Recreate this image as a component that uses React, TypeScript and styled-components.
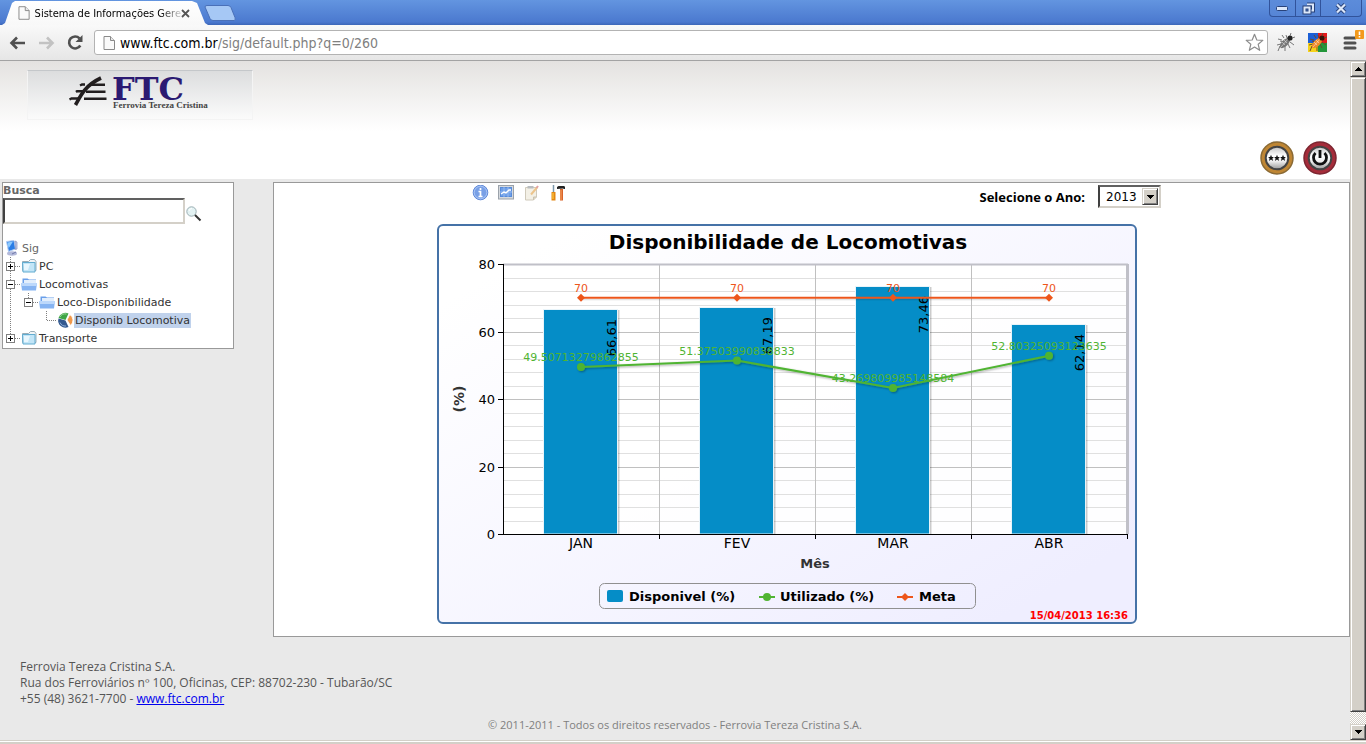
import React from "react";
import styled, { createGlobalStyle, css } from "styled-components";

const verdana = `"DejaVu Sans", Verdana, sans-serif`;
const tahoma = `"DejaVu Sans Condensed", "DejaVu Sans", Tahoma, sans-serif`;
const trebuchet = `"Open Sans", "Trebuchet MS", sans-serif`;

const GlobalStyle = createGlobalStyle`
  * { box-sizing: border-box; }
  body { margin: 0; background: #e9e9e9; font-family: ${verdana}; font-size: 11px; color: #333; }
  button, input, select { font: inherit; color: inherit; margin: 0; }
  svg { display: block; }
`;

const Window = styled.div`
  display: flex;
  flex-direction: column;
  min-height: 100vh;
`;

/* ---------- browser frame ---------- */

const TabStrip = styled.div`
  display: flex;
  align-items: flex-end;
  height: 25px;
  padding-left: 2px;
  background: linear-gradient(#6395e0, #4b79cf 22px, #3c66b8);
`;

const Tab = styled.div`
  display: flex;
  align-items: center;
  width: 206px;
  height: 25px;
  padding: 1px 18px 0 16px;
  background: linear-gradient(#ffffff, #f8f8f8);
  clip-path: polygon(0 100%, 3px 92%, 10px 12%, 13px 4%, 190px 4%, 195px 12%, 203px 92%, 100% 100%);
`;

const TabTitle = styled.span`
  flex: 1;
  margin-left: 5px;
  white-space: nowrap;
  font-family: ${tahoma};
  font-size: 11px;
  color: #000;
  mask-image: linear-gradient(to right, #000 125px, transparent 150px);
`;

const PlainButton = styled.button`
  display: flex;
  align-items: center;
  justify-content: center;
  padding: 0;
  border: 0;
  background: none;
`;

const NewTab = styled(PlainButton)`
  align-self: center;
  margin-left: -4px;
`;

const WindowButtons = styled.div`
  display: flex;
  align-self: flex-start;
  height: 17px;
  margin: 0 4px 0 auto;
  border: 1px solid #31539b;
  border-top: 0;
  border-radius: 0 0 4px 4px;
  background: linear-gradient(#5c8cda, #5685d6);
`;

const WindowButton = styled(PlainButton)<{ $wide?: boolean }>`
  width: ${(p) => (p.$wide ? 41 : 25)}px;
  & + & { border-left: 1px solid #31539b; }
`;

const Toolbar = styled.div`
  display: flex;
  align-items: center;
  height: 36px;
  padding-right: 1px;
  border-bottom: 1px solid #a3a3a3;
  background: linear-gradient(#f9f9f9, #e6e6e6);
`;

const NavButton = styled(PlainButton)`
  width: 29px;
  height: 24px;
  &:first-child { margin-left: 3px; }
`;

const AddressBar = styled.form`
  display: flex;
  flex: 1;
  align-items: center;
  height: 25px;
  margin: 0 1px 0 4px;
  padding: 0 3px 0 8px;
  border: 1px solid #b3b3b3;
  border-radius: 3px;
  background: #fff;
  font-family: ${tahoma};
  font-size: 14px;
`;

const Host = styled.label`
  margin-left: 5px;
  color: #000;
`;

const PathInput = styled.input`
  flex: 1;
  min-width: 0;
  padding: 0;
  border: 0;
  outline: 0;
  background: none;
  color: #808080;
`;

const Extension = styled(PlainButton)`
  width: 32px;
  height: 26px;
`;

const MenuButton = styled(Extension)`
  align-items: flex-start;
  justify-content: flex-end;
  height: 30px;
`;

const Viewport = styled.div`
  display: flex;
  flex: 1;
`;

const StatusEdge = styled.div`
  height: 4px;
  border-top: 1px solid #d4d0c8;
  background: linear-gradient(#fff 1px, #d4d0c8 1px);
`;

/* ---------- scroll bar ---------- */

const raised = css`
  border: 1px solid;
  border-color: #d4d0c8 #404040 #404040 #d4d0c8;
  box-shadow: inset 1px 1px #fff, inset -1px -1px #808080;
  background: #d4d0c8;
`;

const ScrollBar = styled.div`
  display: flex;
  flex-direction: column;
  width: 16px;
  background: repeating-conic-gradient(#fff 0 25%, #d4d0c8 0 50%) 0 0 / 2px 2px;
`;

const ScrollButton = styled(PlainButton)`
  ${raised}
  height: 16px;
`;

const ScrollThumb = styled.div`
  ${raised}
  flex: 1;
  margin-bottom: 12px;
`;

/* ---------- page ---------- */

const Page = styled.div`
  flex: 1;
  min-width: 0;
  background: #e9e9e9;
`;

const Header = styled.header`
  display: flex;
  flex-direction: column;
  justify-content: space-between;
  height: 118px;
  padding: 9px 13px 4px 27px;
  background: linear-gradient(#e4e2e0, #fff 70px);
`;

const Logo = styled.a`
  display: block;
  width: 226px;
  height: 50px;
  border: 1px solid #f4f4f4;
  border-top-color: #c4c7ca;
  background: linear-gradient(#dcddde, #fbfbfb);
`;

const HeaderActions = styled.nav`
  display: flex;
  justify-content: flex-end;
  gap: 9px;
`;

const Columns = styled.div`
  display: flex;
  align-items: flex-start;
  gap: 39px;
  padding: 3px 0 0 2px;
`;

const Sidebar = styled.aside`
  flex: none;
  width: 232px;
  border: 1px solid #999;
  background: #fff;
`;

const SearchLabel = styled.label`
  display: block;
  line-height: 15px;
  font-weight: bold;
  color: #666;
`;

const SearchRow = styled.form`
  display: flex;
  align-items: center;
  gap: 1px;
  margin-bottom: 15px;
`;

const SearchInput = styled.input`
  width: 182px;
  height: 26px;
  padding: 2px;
  border: 2px solid;
  border-color: #606060 #d4d0c8 #d4d0c8 #404040;
  border-radius: 0;
  outline: 0;
`;

const SearchButton = styled(PlainButton)`
  margin-top: 6px;
`;

const Tree = styled.ul`
  margin: 0;
  padding: 0 0 1px;
  list-style: none;
`;

const TreeRow = styled.li`
  display: flex;
  align-items: center;
  height: 18px;
`;

const TreeLink = styled.a<{ $selected?: boolean; $root?: boolean }>`
  padding: 0 1px;
  margin-left: ${(p) => (p.$root ? 0 : -1)}px;
  line-height: 15px;
  text-decoration: none;
  white-space: nowrap;
  color: ${(p) => (p.$root ? "#666" : "#333")};
  background: ${(p) => (p.$selected ? "#c0d2ec" : "none")};
`;

const Main = styled.main`
  display: flex;
  justify-content: center;
  flex: 1;
  min-width: 0;
  padding: 2px 25px 12px 0;
  border: 1px solid #999;
  background: #fff;
`;

const Report = styled.section`
  width: 724px;
`;

const ReportBar = styled.div`
  display: flex;
  align-items: center;
  justify-content: space-between;
  height: 23px;
  margin-bottom: 16px;
  padding-left: 35px;
`;

const ReportTools = styled.div`
  display: flex;
  align-self: flex-start;
  gap: 9px;
`;

const YearPicker = styled.div`
  display: flex;
  align-items: center;
  gap: 13px;
`;

const YearLabel = styled.label`
  font-family: ${trebuchet};
  font-size: 13px;
  font-weight: bold;
  color: #000;
`;

const SelectBox = styled.div`
  position: relative;
  width: 63px;
  height: 23px;
  border: 2px solid;
  border-color: #606060 #d4d0c8 #d4d0c8 #404040;
  background: #fff;
`;

const YearSelect = styled.select`
  width: 100%;
  height: 100%;
  padding: 0 0 0 6px;
  border: 0;
  outline: 0;
  appearance: none;
  background: none;
  font-size: 12px;
  color: #000;
`;

const SelectArrow = styled.span`
  ${raised}
  position: absolute;
  top: 1px;
  right: 1px;
  bottom: 1px;
  display: flex;
  align-items: center;
  justify-content: center;
  width: 16px;
  pointer-events: none;
`;

const ChartCard = styled.figure`
  width: 700px;
  margin: 0;
  border: 2px solid #4572a7;
  border-radius: 6px;
  background: linear-gradient(150deg, #fff 10%, #efeeff 90%);
`;

const Footer = styled.footer`
  padding: 22px 0 7px;
  font-family: ${trebuchet};
  font-size: 12px;
  line-height: 16px;
  color: #555;
`;

const Address = styled.address`
  padding-left: 20px;
  font-style: normal;
  a { color: #0000ee; }
`;

const Copyright = styled.p`
  margin: 10px 0 0;
  text-align: center;
  font-size: 11px;
  color: #808080;
`;

/* ---------- icons ---------- */

const PageIcon = ({ h = 14 }: { h?: number }) => (
  <svg width="12" height={h} viewBox="0 0 12 14">
    <path d="M1 .5h6.500l4 4v9h-10.500z" fill="#fafafa" stroke="#8a8a8a" />
    <path d="M7.500 .5v4h4" fill="#e8e8e8" stroke="#8a8a8a" />
  </svg>
);

const Arrow = ({ dim, flip }: { dim?: boolean; flip?: boolean }) => (
  <svg width="17" height="14" viewBox="0 0 17 14" transform={flip ? "scale(-1 1)" : undefined}>
    <path d="M8 1.500L2.500 7L8 12.500M3 7h13" fill="none" stroke={dim ? "#c2c2c2" : "#505050"} strokeWidth="2.600" />
  </svg>
);

const ReloadIcon = () => (
  <svg width="17" height="17" viewBox="0 0 17 17">
    <path d="M13.300 11.500A6 6 0 1 1 12.500 4.300" fill="none" stroke="#505050" strokeWidth="2.600" />
    <path d="M15.500 1v7h-7z" fill="#505050" />
  </svg>
);

const Triangle = ({ up }: { up?: boolean }) => (
  <svg width="7" height="4" viewBox="0 0 7 4" shapeRendering="crispEdges">
    <path d={up ? "M0 4L3.500 0L7 4z" : "M0 0h7L3.500 4z"} fill="#000" />
  </svg>
);

const BugBody = ({ body, legs, dark }: { body: string; legs: string; dark: string }) => (
  <>
    <path d="M6 7L2 6M8 5L6 2M5 11L1 12M4 13L2 18M9 13L9 18M12 11L14 15M14 9L18 12M8 9L4 8M11 5L10 2" stroke={legs} strokeWidth="1" fill="none" />
    <ellipse cx="9" cy="10" rx="6.500" ry="3.200" transform="rotate(-45 9 10)" fill={body} />
    <path d="M5 14L12 6M6 9L9 12M8 7L11 10" stroke="#fff" strokeOpacity=".45" />
    <circle cx="14" cy="5" r="2.600" fill={dark} />
    <path d="M14 3L15 0M16 5L19 4" stroke={legs} />
  </>
);

const GreyBug = () => (
  <svg width="19" height="19" viewBox="0 0 19 19"><BugBody body="#777" legs="#777" dark="#222" /></svg>
);

const ColourBug = () => (
  <svg width="19" height="19" viewBox="0 0 19 19">
    <path d="M0 0h10v10H0z" fill="#1c5fd6" />
    <path d="M10 0h9v10h-9z" fill="#e3191c" />
    <path d="M0 10h10v9H0z" fill="#f6d21a" />
    <path d="M10 10h9v9h-9z" fill="#23963a" />
    <BugBody body="#f08a2c" legs="#6b4a2a" dark="#3a1208" />
  </svg>
);

const MenuIcon = () => (
  <svg width="24" height="24" viewBox="0 0 24 24">
    <path d="M4 10h10M4 15h10M4 20h10" stroke="#505050" strokeWidth="3" strokeLinecap="round" />
    <rect x="14" y="2" width="9" height="9" rx="1" fill="#f39a1d" />
    <path d="M18.500 3.500v3.500M18.500 8v1.500" stroke="#fff" strokeWidth="1.600" />
  </svg>
);

const FtcLogo = () => (
  <svg width="224" height="48" viewBox="28 71 224 48">
    <g stroke="#221e1f" fill="none">
      <path d="M75.500 105C80 97 84 86 101 78" strokeWidth="3.600" />
      <path d="M80 85.500L82 84.500H85M76 92l1-.8h6M69.500 99.500l2-1h7.500" strokeWidth="2.400" />
      <path d="M90 84.700h15M86 91.700h19.500M84 98.800h22.500" strokeWidth="2.600" />
    </g>
    <text x="112" y="100" fontFamily="DejaVu Serif, serif" fontWeight="bold" fontSize="32" fill="#2b1a72">FTC</text>
    <text x="113" y="108" fontFamily="Liberation Serif, serif" fontWeight="bold" fontSize="9" fill="#444">Ferrovia Tereza Cristina</text>
  </svg>
);

const RoundIcon = ({ ring, edge, children }: { ring: string; edge: string; children: React.ReactNode }) => (
  <svg width="34" height="34" viewBox="0 0 34 34">
    <defs>
      <linearGradient id={`disc${edge.slice(1)}`} x2="0" y2="1">
        <stop offset="0" stopColor="#c4c4c4" />
        <stop offset=".4" stopColor="#fff" />
        <stop offset=".65" stopColor="#eee" />
        <stop offset="1" stopColor="#999" />
      </linearGradient>
    </defs>
    <circle cx="17" cy="17" r="16" fill={ring} stroke={edge} strokeWidth="1.500" />
    <circle cx="17" cy="17" r="11.300" fill={`url(#disc${edge.slice(1)})`} stroke="#444" strokeWidth="2" />
    {children}
  </svg>
);

const star = (cx: number) =>
  `M${cx} 13.800l.9 2.200h2l-1.500 1.600.7 2.400-2.100-1.400-2.100 1.400.7-2.400-1.500-1.600h2z`;

const MagnifierIcon = () => (
  <svg width="16" height="16" viewBox="0 0 16 16">
    <circle cx="5.500" cy="5.500" r="4.700" fill="#e3f2f3" stroke="#9aaeb2" />
    <path d="M9 9L14.500 14.500" stroke="#333" strokeWidth="2" />
    <path d="M3 5a3 3 0 0 1 3-2.500" stroke="#fff" fill="none" />
  </svg>
);

const ComputerIcon = () => (
  <svg width="18" height="18" viewBox="0 0 18 18">
    <ellipse cx="9" cy="14.500" rx="5" ry="2.200" fill="#b3b9da" />
    <path d="M9 15l4-2" stroke="#6f78a8" />
    <path d="M3.500 2.500L11 1.500l1.500 8.500L5.500 12.500z" fill="#2a7de6" stroke="#b4cdf2" />
    <path d="M4.500 3.500L10 2.500L6.500 8L5.500 9z" fill="#8ccaff" />
    <path d="M12 2l2 1v7l-1.500 .5z" fill="#c7cdea" stroke="#8891b8" strokeWidth=".7" />
  </svg>
);

const FolderIcon = ({ open }: { open?: boolean }) => (
  <svg width="18" height="18" viewBox="0 0 18 18">
    {open ? (
      <>
        <path d="M1.500 3.500h5l1.500 1h7v5h-13.500z" fill="#6a9fea" />
        <path d="M3 5h12v3H3z" fill="#e2eefc" />
        <path d="M0 8h16l-1 7.500H1z" fill="#86b4f2" />
        <path d="M0 8h16l-.4 3H.4z" fill="#bcd8fb" />
      </>
    ) : (
      <>
        <path d="M1.500 4.500h6l2-2h4l1.500 2v9h-13.500z" fill="#f1f4f6" stroke="#9aacb6" />
        <path d="M1.500 5.500h12.500v9.500h-12z" fill="#c2e5f7" stroke="#62acd0" />
        <path d="M3 7h6l-2 6H3z" fill="#e9f7fe" />
      </>
    )}
  </svg>
);

const PieIcon = () => (
  <svg width="18" height="18" viewBox="0 0 18 18">
    <path d="M8.500 9.500L1.500 7.500A7.200 7.200 0 0 0 11.500 16z" fill="#34598f" />
    <path d="M3 11.500A6 6 0 0 0 9 15" stroke="#8fb0da" fill="none" />
    <path d="M8.500 9L1.500 7A7.200 7.200 0 0 1 11.500 2.500z" fill="#3ea545" />
    <path d="M3 6A6 6 0 0 1 9.500 3" stroke="#9bd89b" fill="none" />
    <path d="M10 9L12.800 3.500a6.800 6.800 0 0 1 .7 11z" fill="#f0994c" stroke="#fff" strokeWidth=".8" />
  </svg>
);

const dots = { stroke: "#808080", strokeDasharray: "1 1" };

/* One 18px gutter cell of the tree: guide lines and, where there is one, the +/- box. */
const Gutter = ({ kind }: { kind: "none" | "line" | "elbow" | "plus" | "minus" | "plusLast" | "minusLast" }) => {
  const box = kind.startsWith("plus") || kind.startsWith("minus");
  const last = kind.endsWith("Last") || kind === "elbow";
  return (
    <svg width="18" height="18" viewBox="0 0 18 18" shapeRendering="crispEdges">
      {kind !== "none" && <path d={last ? "M7.500 0v9" : "M7.500 0v18"} {...dots} />}
      {(box || kind === "elbow") && <path d="M8 9.500h10" {...dots} />}
      {box && <rect x="3.500" y="5.500" width="8" height="8" fill="#fff" stroke="#808080" />}
      {box && <path d="M5 9.500h5" stroke="#000" />}
      {kind.startsWith("plus") && <path d="M7.500 7v5" stroke="#000" />}
    </svg>
  );
};

const InfoIcon = () => (
  <svg width="17" height="17" viewBox="0 0 17 17">
    <circle cx="8.500" cy="7.500" r="7.300" fill="#79a0e6" stroke="#5f88d8" />
    <circle cx="8.500" cy="7.500" r="6.300" fill="none" stroke="#a9c5f5" />
    <path d="M8.500 3v2M6.500 6.500h2v5M6.500 11.500h4" stroke="#fff" strokeWidth="1.700" fill="none" />
  </svg>
);

const ChartIcon = () => (
  <svg width="17" height="17" viewBox="0 0 17 17">
    <rect x=".5" y=".5" width="15" height="13.500" fill="#d5d9de" stroke="#9ba2aa" />
    <rect x="2.500" y="2.500" width="11" height="9" fill="#6e9fe8" stroke="#588bd9" />
    <path d="M6 2v10M10 2v10M2 7h12" stroke="#94b9f1" />
    <path d="M3 9l3-2 2 1 3-3h2" stroke="#fff" strokeWidth="1.400" fill="none" />
  </svg>
);

const NoteIcon = () => (
  <svg width="17" height="17" viewBox="0 0 17 17">
    <path d="M1.500 2.500h11v9.500l-3 3h-8z" fill="#f3f0e6" stroke="#d0cabb" />
    <path d="M3.500 1h6v2.500h-6z" fill="#b8bcbf" />
    <path d="M9.500 15v-3h3" fill="#ddd5c0" stroke="#c9c3b2" />
    <path d="M7 9.500L13 2.500" stroke="#ecc48c" strokeWidth="2" />
    <path d="M12.500 3l1.500-2" stroke="#e0a0a0" strokeWidth="2" />
  </svg>
);

const ToolsIcon = () => (
  <svg width="17" height="17" viewBox="0 0 17 17">
    <path d="M3.500 0v7" stroke="#7c98ac" strokeWidth="1.500" />
    <path d="M3.500 7v8.500" stroke="#e38612" strokeWidth="4" />
    <path d="M3 8v6" stroke="#ffd24a" />
    <path d="M7 4V2l1.500-1h5.500l1 .8V4h-1.500v-.5z" fill="#222" />
    <path d="M11.500 4v11.500" stroke="#d9642a" strokeWidth="3" />
    <path d="M11 5v10" stroke="#f7a766" />
  </svg>
);

/* ---------- chart ---------- */

const months = [
  { name: "JAN", bar: 66.61, barText: "66,61", used: 49.50713279862855, usedText: "49.50713279862855" },
  { name: "FEV", bar: 67.19, barText: "67,19", used: 51.37503990838833, usedText: "51.37503990838833" },
  { name: "MAR", bar: 73.46, barText: "73,46", used: 43.269809985148584, usedText: "43.269809985148584" },
  { name: "ABR", bar: 62.14, barText: "62,14", used: 52.80325093123635, usedText: "52.80325093123635" },
];
const goal = 70;
const plot = { left: 64, right: 688, top: 38, bottom: 308 };
const step = (plot.right - plot.left) / months.length;
const yOf = (v: number) => plot.bottom - (v * (plot.bottom - plot.top)) / 80;
const xOf = (i: number) => plot.left + step * (i + 0.5);
const crisp = (v: number) => Math.round(v) + 0.5;
const BLUE = "#058dc7";
const GREEN = "#50b432";
const ORANGE = "#ed561b";

const Diamond = ({ x, y }: { x: number; y: number }) => (
  <path d={`M${x - 4} ${y}l4-4 4 4-4 4z`} fill={ORANGE} />
);

const AvailabilityChart = () => (
  <svg width="696" height="396" viewBox="0 0 696 396" fontFamily="DejaVu Sans, Verdana, sans-serif" fontSize="13" role="img" aria-label="Disponibilidade de Locomotivas">
    <defs>
      <filter id="soft" x="-10%" y="-10%" width="120%" height="140%">
        <feDropShadow dx="1" dy="1" stdDeviation="1" floodOpacity=".35" />
      </filter>
    </defs>
    <text x="349" y="23" textAnchor="middle" fontSize="20" fontWeight="bold">Disponibilidade de Locomotivas</text>

    <rect x={plot.left} y={plot.top} width={plot.right - plot.left} height={plot.bottom - plot.top} fill="#fff" fillOpacity=".9" />
    {Array.from({ length: 21 }, (_, i) => (
      <path key={i} d={`M${plot.left} ${crisp(yOf(i * 4))}H${plot.right}`} stroke={i % 5 ? "#e0e0e0" : "#c0c0c0"} />
    ))}
    {[1, 2, 3].map((i) => (
      <path key={i} d={`M${plot.left + step * i + 0.5} ${plot.top}V${plot.bottom}`} stroke="#c0c0c0" />
    ))}
    <path d={`M${plot.left} ${plot.top + 0.5}H${plot.right + 1}`} stroke="#c0c0c8" strokeWidth="2" />
    <path d={`M${plot.right + 0.5} ${plot.top}V${plot.bottom}`} stroke="#c0c0c8" strokeWidth="3" />

    {months.map((m, i) => {
      const top = Math.round(yOf(m.bar)) + 1;
      return (
        <g key={m.name}>
          <path d={`M${xOf(i) + 37.5} ${top}V${plot.bottom}`} stroke="#000" strokeOpacity=".2" strokeWidth="2" />
          <rect x={xOf(i) - 37.5} y={top - 0.5} width="74" height={plot.bottom - top + 0.5} fill={BLUE} stroke="#e8f4fa" />
          <text transform={`translate(${xOf(i) + 35} ${top + 9}) rotate(-90)`} textAnchor="end" fontSize="13">{m.barText}</text>
        </g>
      );
    })}

    <g stroke="#000">
      <path d={`M${plot.left + 0.5} ${plot.top}V${plot.bottom}M${plot.left} ${plot.bottom + 0.5}H${plot.right + 1}`} />
      {[0, 20, 40, 60, 80].map((v) => (
        <path key={v} d={`M${plot.left - 5} ${crisp(yOf(v))}h5`} />
      ))}
      {[1, 2, 3, 4].map((i) => (
        <path key={i} d={`M${plot.left + step * i + 0.5} ${plot.bottom}v5`} />
      ))}
    </g>
    {[0, 20, 40, 60, 80].map((v) => (
      <text key={v} x={plot.left - 8} y={yOf(v) + 5} textAnchor="end">{v}</text>
    ))}
    {months.map((m, i) => (
      <text key={m.name} x={xOf(i)} y="322" textAnchor="middle" fontSize="14">{m.name}</text>
    ))}
    <text x="376" y="342" textAnchor="middle" fontWeight="bold" fill="#333">Mês</text>
    <text transform="translate(25 173) rotate(-90)" textAnchor="middle" fontWeight="bold" fontSize="14" fill="#333">(%)</text>

    <g filter="url(#soft)">
      <polyline points={months.map((m, i) => `${xOf(i)},${yOf(m.used)}`).join(" ")} fill="none" stroke={GREEN} strokeWidth="2" />
      {months.map((m, i) => <circle key={m.name} cx={xOf(i)} cy={yOf(m.used)} r="4" fill={GREEN} />)}
    </g>
    <g>
      <path d={`M${xOf(0)} ${yOf(goal) + 2}H${xOf(3)}`} stroke="#000" strokeOpacity=".15" />
      <path d={`M${xOf(0)} ${yOf(goal)}H${xOf(3)}`} stroke={ORANGE} strokeWidth="2" />
      {months.map((m, i) => <Diamond key={m.name} x={xOf(i)} y={yOf(goal)} />)}
    </g>
    <g fontSize="11" textAnchor="middle">
      {months.map((m, i) => (
        <React.Fragment key={m.name}>
          <text x={xOf(i)} y={yOf(m.used) - 6} fill={GREEN}>{m.usedText}</text>
          <text x={xOf(i)} y={yOf(goal) - 6} fill={ORANGE}>{goal}</text>
        </React.Fragment>
      ))}
    </g>

    <rect x="160.500" y="357.500" width="376" height="25" rx="5" fill="none" stroke="#909090" />
    <g fontWeight="bold">
      <rect x="168" y="364" width="16" height="12" rx="2" fill={BLUE} />
      <text x="190" y="375">Disponivel (%)</text>
      <path d="M320 371h16" stroke={GREEN} strokeWidth="2" />
      <circle cx="328" cy="371" r="4" fill={GREEN} />
      <text x="341" y="375">Utilizado (%)</text>
      <path d="M458 371h16" stroke={ORANGE} strokeWidth="2" />
      <Diamond x={466} y={371} />
      <text x="480" y="375">Meta</text>
    </g>
    <text x="689" y="393" textAnchor="end" fontSize="10" fontWeight="bold" fontFamily="DejaVu Sans, Verdana, sans-serif" fill="#f00">15/04/2013 16:36</text>
  </svg>
);

export default function App() {
  return (
    <Window>
      <GlobalStyle />
      <TabStrip>
        <Tab>
          <PageIcon />
          <TabTitle>Sistema de Informações Gere</TabTitle>
          <PlainButton aria-label="Fechar guia">
            <svg width="9" height="9" viewBox="0 0 9 9"><path d="M1 1l7 7M8 1L1 8" stroke="#555" strokeWidth="1.800" /></svg>
          </PlainButton>
        </Tab>
        <NewTab aria-label="Nova guia">
          <svg width="32" height="16" viewBox="0 0 32 16"><path d="M1 2Q1 .5 3 .5h21q2 0 3 2l4 10q1 3-1 3H9q-2 0-3-2z" fill="#a6c8f5" stroke="#4a70b8" /></svg>
        </NewTab>
        <WindowButtons>
          <WindowButton aria-label="Minimizar">
            <svg width="13" height="5" viewBox="0 0 13 5"><rect x=".5" y=".5" width="11" height="4" rx="1" fill="#dce8fa" stroke="#29427a" /></svg>
          </WindowButton>
          <WindowButton aria-label="Restaurar">
            <svg width="13" height="13" viewBox="0 0 13 13" fill="none">
              <path d="M5 2.500h6v6H9" stroke="#29427a" strokeWidth="4" /><path d="M5 2.500h6v6H9" stroke="#dce8fa" strokeWidth="2" />
              <rect x="2.500" y="5.500" width="5" height="5" stroke="#29427a" strokeWidth="4" /><rect x="2.500" y="5.500" width="5" height="5" stroke="#dce8fa" strokeWidth="2" />
            </svg>
          </WindowButton>
          <WindowButton $wide aria-label="Fechar">
            <svg width="12" height="11" viewBox="0 0 12 11"><path d="M2 1.500l8 8M10 1.500l-8 8" stroke="#29427a" strokeWidth="4" /><path d="M2 1.500l8 8M10 1.500l-8 8" stroke="#dce8fa" strokeWidth="2.200" /></svg>
          </WindowButton>
        </WindowButtons>
      </TabStrip>
      <Toolbar>
        <NavButton aria-label="Voltar"><Arrow /></NavButton>
        <NavButton aria-label="Avançar"><Arrow dim flip /></NavButton>
        <NavButton aria-label="Recarregar"><ReloadIcon /></NavButton>
        <AddressBar>
          <PageIcon h={16} />
          <Host htmlFor="url">www.ftc.com.br</Host>
          <PathInput id="url" defaultValue="/sig/default.php?q=0/260" />
          <PlainButton type="button" aria-label="Favorito">
            <svg width="19" height="19" viewBox="0 0 19 19"><path d="M9.500 1.300l2.300 5.700 6 .4-4.600 3.900 1.500 6-5.200-3.300-5.200 3.300 1.500-6L1.200 7.400l6-.4z" fill="#fff" stroke="#8c8c8c" strokeWidth="1.200" strokeLinejoin="round" /></svg>
          </PlainButton>
        </AddressBar>
        <Extension aria-label="Depurador"><GreyBug /></Extension>
        <Extension aria-label="Inspetor"><ColourBug /></Extension>
        <MenuButton aria-label="Menu"><MenuIcon /></MenuButton>
      </Toolbar>

      <Viewport>
        <Page>
          <Header>
            <Logo href="#" aria-label="FTC Ferrovia Tereza Cristina"><FtcLogo /></Logo>
            <HeaderActions>
              <PlainButton aria-label="Alterar senha">
                <RoundIcon ring="#bf8634" edge="#8a6a35">
                  <path d={star(11) + star(17) + star(23)} fill="#111" />
                </RoundIcon>
              </PlainButton>
              <PlainButton aria-label="Sair">
                <RoundIcon ring="#a52c3a" edge="#7c2530">
                  <path d="M12.500 12a6.500 6.500 0 1 0 9 0M17 9v8" stroke="#111" strokeWidth="2.800" fill="none" />
                </RoundIcon>
              </PlainButton>
            </HeaderActions>
          </Header>

          <Columns>
            <Sidebar>
              <SearchLabel htmlFor="busca">Busca</SearchLabel>
              <SearchRow>
                <SearchInput id="busca" type="text" />
                <SearchButton type="button" aria-label="Buscar"><MagnifierIcon /></SearchButton>
              </SearchRow>
              <Tree>
                <TreeRow><ComputerIcon /><TreeLink href="#" $root>Sig</TreeLink></TreeRow>
                <TreeRow><Gutter kind="plus" /><FolderIcon /><TreeLink href="#">PC</TreeLink></TreeRow>
                <TreeRow><Gutter kind="minus" /><FolderIcon open /><TreeLink href="#">Locomotivas</TreeLink></TreeRow>
                <TreeRow><Gutter kind="line" /><Gutter kind="minusLast" /><FolderIcon open /><TreeLink href="#">Loco-Disponibilidade</TreeLink></TreeRow>
                <TreeRow><Gutter kind="line" /><Gutter kind="none" /><Gutter kind="elbow" /><PieIcon /><TreeLink href="#" $selected>Disponib Locomotiva</TreeLink></TreeRow>
                <TreeRow><Gutter kind="plusLast" /><FolderIcon /><TreeLink href="#">Transporte</TreeLink></TreeRow>
              </Tree>
            </Sidebar>

            <Main>
              <Report>
                <ReportBar>
                  <ReportTools>
                    <PlainButton aria-label="Informações"><InfoIcon /></PlainButton>
                    <PlainButton aria-label="Gráfico"><ChartIcon /></PlainButton>
                    <PlainButton aria-label="Anotações"><NoteIcon /></PlainButton>
                    <PlainButton aria-label="Ferramentas"><ToolsIcon /></PlainButton>
                  </ReportTools>
                  <YearPicker>
                    <YearLabel htmlFor="ano">Selecione o Ano:</YearLabel>
                    <SelectBox>
                      <YearSelect id="ano" defaultValue="2013">
                        <option>2013</option>
                        <option>2012</option>
                      </YearSelect>
                      <SelectArrow><Triangle /></SelectArrow>
                    </SelectBox>
                  </YearPicker>
                </ReportBar>
                <ChartCard><AvailabilityChart /></ChartCard>
              </Report>
            </Main>
          </Columns>

          <Footer>
            <Address>
              Ferrovia Tereza Cristina S.A.<br />
              Rua dos Ferroviários nº 100, Oficinas, CEP: 88702-230 - Tubarão/SC<br />
              +55 (48) 3621-7700 - <a href="#">www.ftc.com.br</a>
            </Address>
            <Copyright>© 2011-2011 - Todos os direitos reservados - Ferrovia Tereza Cristina S.A.</Copyright>
          </Footer>
        </Page>
        <ScrollBar>
          <ScrollButton aria-label="Rolar para cima"><Triangle up /></ScrollButton>
          <ScrollThumb />
          <ScrollButton aria-label="Rolar para baixo"><Triangle /></ScrollButton>
        </ScrollBar>
      </Viewport>
      <StatusEdge />
    </Window>
  );
}
